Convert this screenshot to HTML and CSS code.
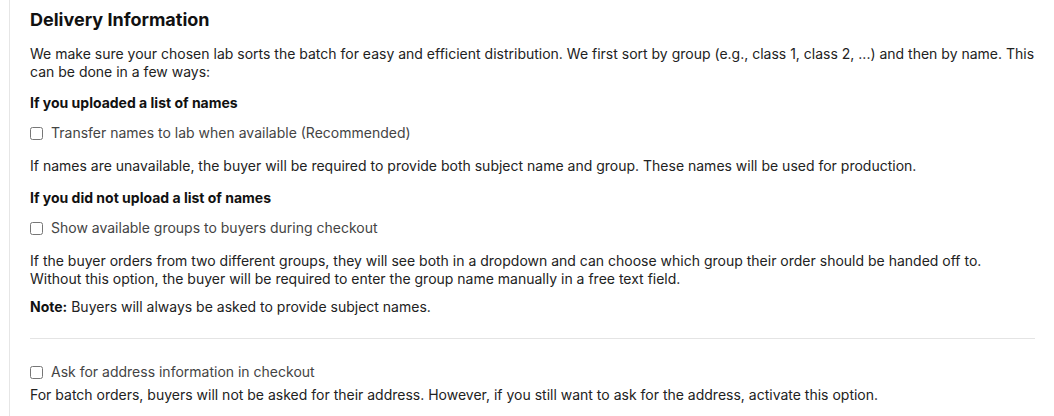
FILE: index.html
```html
<!DOCTYPE html>
<html lang="en">
<head>
<meta charset="utf-8">
<link rel="stylesheet" href="styles.css">
</head>
<body>
<section class="panel">
  <h2 class="title">Delivery Information</h2>
  <p class="text intro">We make sure your chosen lab sorts the batch for easy and efficient distribution. We first sort by group (e.g., class 1, class 2, ...) and then by name. This can be done in a few ways:</p>

  <h3 class="subhead">If you uploaded a list of names</h3>
  <label class="check"><input type="checkbox"><span>Transfer names to lab when available (Recommended)</span></label>
  <p class="text after-check">If names are unavailable, the buyer will be required to provide both subject name and group. These names will be used for production.</p>

  <h3 class="subhead">If you did not upload a list of names</h3>
  <label class="check"><input type="checkbox"><span>Show available groups to buyers during checkout</span></label>
  <p class="text after-check last">If the buyer orders from two different groups, they will see both in a dropdown and can choose which group their order should be handed off to.<br>Without this option, the buyer will be required to enter the group name manually in a free text field.</p>
  <p class="text note"><strong>Note:</strong> Buyers will always be asked to provide subject names.</p>

  <hr class="divider">

  <label class="check"><input type="checkbox"><span>Ask for address information in checkout</span></label>
  <p class="text tight">For batch orders, buyers will not be asked for their address. However, if you still want to ask for the address, activate this option.</p>
</section>
</body>
</html>
```

FILE: styles.css
```css
html, body {
  margin: 0;
  padding: 0;
  background: #ffffff;
}

body {
  font-family: Inter, "Noto Sans", "Liberation Sans", sans-serif;
  font-size: 14px;
  line-height: 18px;
  color: #222222;
}

.panel {
  box-sizing: border-box;
  margin-left: 9px;
  border-left: 1px solid #e6e6e6;
  padding: 8px 19px 0 20px;
  min-height: 100vh;
}

.title {
  margin: 0 0 13px;
  font-size: 18px;
  line-height: 24px;
  font-weight: 700;
  color: #111111;
}

.text {
  margin: 0;
}

.intro {
  margin-bottom: 13px;
}

.subhead {
  margin: 0 0 12px;
  font-size: 14px;
  line-height: 18px;
  font-weight: 700;
  color: #111111;
}

.check {
  display: flex;
  align-items: center;
  gap: 8px;
  height: 18px;
  color: #444444;
}

.check input {
  margin: 0;
  width: 13px;
  height: 13px;
}

.after-check {
  margin-top: 15px;
  margin-bottom: 14px;
}

.after-check.last {
  margin-bottom: 0;
}

.note {
  margin-top: 10px;
}

.note strong {
  font-weight: 700;
  color: #111111;
}

.divider {
  border: 0;
  border-top: 1px solid #e4e4e4;
  margin: 22px 0 24px;
}

.tight {
  margin-top: 5px;
}
```
